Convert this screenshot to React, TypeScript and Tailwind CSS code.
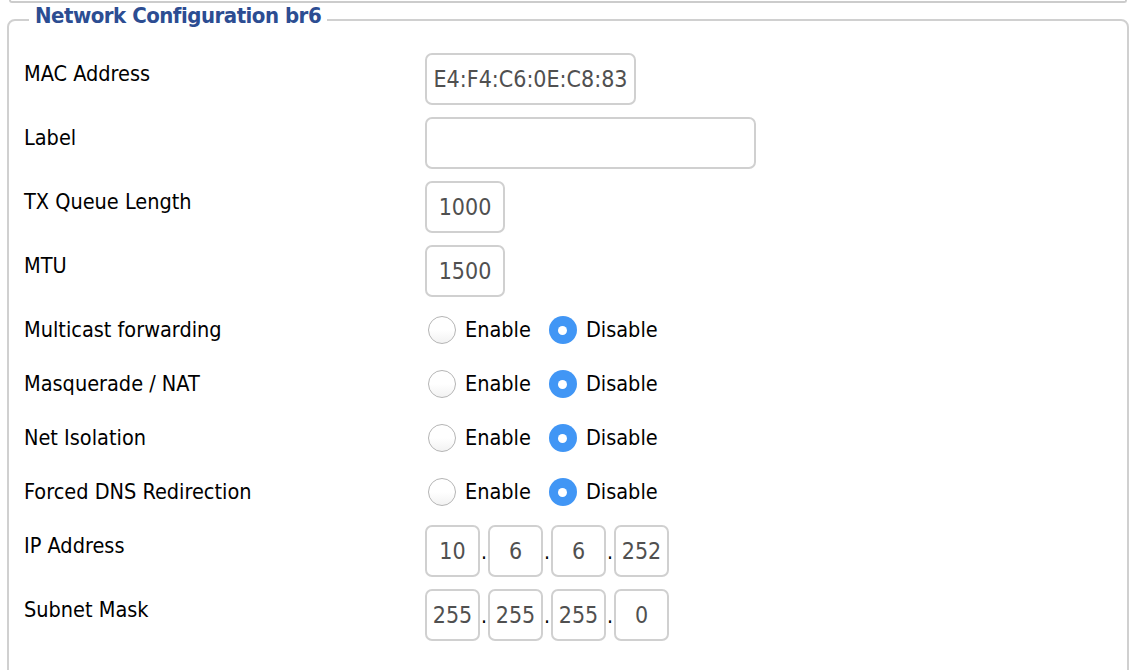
import React from "react";

const font = { fontFamily: '"DejaVu Sans Condensed", "Liberation Sans", sans-serif' };

type TextRow = { label: string; value: string; width: string };

const textRows: TextRow[] = [
  { label: "MAC Address", value: "E4:F4:C6:0E:C8:83", width: "w-[211px]" },
  { label: "Label", value: "", width: "w-[331px]" },
  { label: "TX Queue Length", value: "1000", width: "w-[80px]" },
  { label: "MTU", value: "1500", width: "w-[80px]" },
];

const toggleRows = [
  "Multicast forwarding",
  "Masquerade / NAT",
  "Net Isolation",
  "Forced DNS Redirection",
];

const ipRows = [
  { label: "IP Address", parts: ["10", "6", "6", "252"] },
  { label: "Subnet Mask", parts: ["255", "255", "255", "0"] },
];

const inputClass =
  "h-[52px] rounded-[7px] border-2 border-[#d0d0d0] bg-white px-[2px] text-center text-[23px] text-[#505050] outline-none";

const Radio: React.FC<{ checked?: boolean; label: string }> = ({ checked, label }) => (
  <label className="flex items-center">
    {checked ? (
      <span className="flex h-[28px] w-[28px] items-center justify-center rounded-full bg-[#4196f5]">
        <span className="h-[9px] w-[9px] rounded-full bg-white" />
      </span>
    ) : (
      <span className="h-[28px] w-[28px] rounded-full border border-[#b5b5b5] bg-gradient-to-b from-white via-white to-[#f2f2f2]" />
    )}
    <span className="ml-[9px] text-[21.5px] leading-[28px] text-black">{label}</span>
  </label>
);

const Label: React.FC<{ children: React.ReactNode }> = ({ children }) => (
  <div className="w-[401px] shrink-0 text-[21.5px] leading-[28px] text-black">{children}</div>
);

export default function App() {
  return (
    <div className="min-h-[670px] w-[1142px] overflow-hidden bg-white" style={font}>
      <div className="ml-[9px] h-[3px] w-[1118px] rounded-b-[6px] border-x-2 border-b-2 border-[#cccccc]" />

      <fieldset className="ml-[7px] mt-[-1px] w-[1122px] rounded-[8px] border-2 border-[#d0d0d0] px-[15px] pb-[40px] pt-[9px]">
        <legend className="ml-[5px] px-[6px] pb-[8px] text-[22px] font-bold leading-[28px] tracking-[-0.5px] text-[#2c4d92]">
          Network Configuration br6
        </legend>

        {textRows.map((row) => (
          <div key={row.label} className="flex items-start py-[6px]">
            <div className="pt-[7px]">
              <Label>{row.label}</Label>
            </div>
            <input readOnly value={row.value} className={`${inputClass} ${row.width}`} />
          </div>
        ))}

        {toggleRows.map((label) => (
          <div key={label} className="flex h-[54px] items-center">
            <Label>{label}</Label>
            <div className="ml-[3px] flex items-center gap-[18px]">
              <Radio label="Enable" />
              <Radio checked label="Disable" />
            </div>
          </div>
        ))}

        {ipRows.map((row) => (
          <div key={row.label} className="flex items-start py-[6px]">
            <div className="pt-[7px]">
              <Label>{row.label}</Label>
            </div>
            <div className="flex items-baseline">
              {row.parts.map((part, i) => (
                <React.Fragment key={i}>
                  {i > 0 ? (
                    <span className="w-[8px] text-center text-[21px] text-black">.</span>
                  ) : null}
                  <input readOnly value={part} className={`${inputClass} w-[55px]`} />
                </React.Fragment>
              ))}
            </div>
          </div>
        ))}
      </fieldset>
    </div>
  );
}
